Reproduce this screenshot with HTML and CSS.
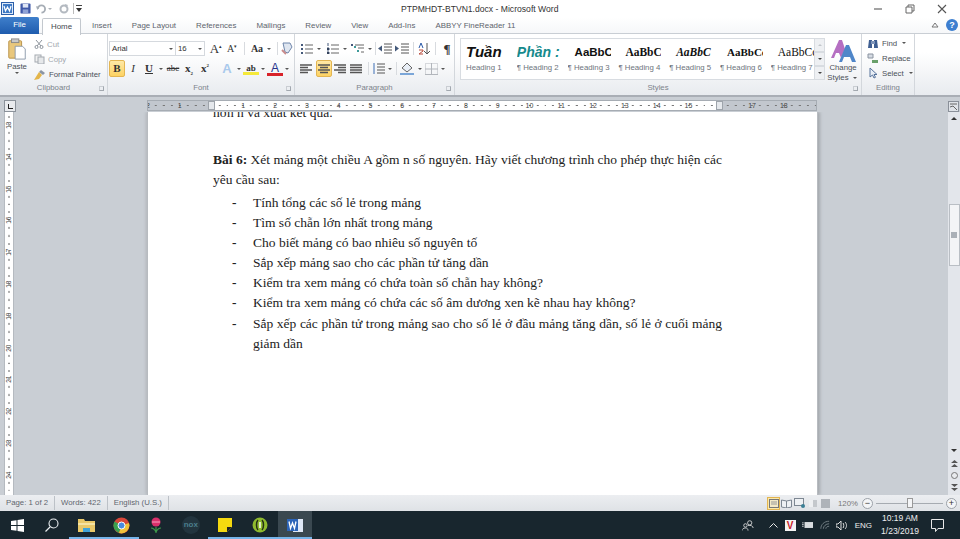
FILE: index.html
```html
<!DOCTYPE html>
<html lang="vi">

<head>
    <meta charset="UTF-8">
    <meta name="viewport" content="width=device-width, initial-scale=1.0">
    <title>PTPMHDT-BTVN1.docx - Microsoft Word</title>
    <link rel="stylesheet" href="styles.css">
</head>

<body>
    <div id="app">
        <!-- title bar -->
        <div class="titlebar">
            <div class="qat">
                <svg class="q-word" width="13" height="13" viewBox="0 0 13 13"><rect x=".5" y=".5" width="12" height="12" fill="#dfeaf8" stroke="#2b5ea8"/><rect x="2" y="2" width="9" height="9" fill="#3e79c4"/><path d="M3 4l1.500 5 2-4 2 4L10 4" fill="none" stroke="#fff" stroke-width="1.200"/></svg>
                <svg class="q-save" width="11" height="11" viewBox="0 0 12 12"><rect x=".5" y=".5" width="11" height="11" rx="1" fill="#3f58a8"/><rect x="3" y="1" width="6" height="4" fill="#dfe6f5"/><rect x="3" y="7" width="6" height="4" fill="#8fa3d6"/></svg>
                <svg class="q-undo" width="10" height="10" viewBox="0 0 11 10"><path d="M2 5 A4 4 0 1 1 6 9" fill="none" stroke="#a6adb5" stroke-width="2"/><path d="M0 2l4 .5L1.500 6z" fill="#a6adb5"/></svg>
                <span class="q-arrow"></span>
                <svg class="q-redo" width="10" height="10" viewBox="0 0 10 10"><circle cx="5" cy="5" r="3.500" fill="none" stroke="#b3b9c0" stroke-width="2"/><path d="M6 0l3 1-2 3z" fill="#b3b9c0"/></svg>
                <span class="q-sep"></span>
                <svg class="q-more" width="6" height="7" viewBox="0 0 6 7"><path d="M0 .5h6" stroke="#444"/><path d="M0 3h6L3 7z" fill="#333"/></svg>
            </div>
            <div class="doc-title">PTPMHDT-BTVN1.docx - Microsoft Word</div>
            <div class="winctl">
                <svg width="10" height="10" viewBox="0 0 10 10"><path d="M1 5h8" stroke="#666" stroke-width="1.200"/></svg>
                <svg width="10" height="10" viewBox="0 0 10 10"><path d="M1 3h6v6H1zM3 3V1h6v6H7" fill="none" stroke="#666"/></svg>
                <svg width="10" height="10" viewBox="0 0 10 10"><path d="M1 1l8 8M9 1L1 9" stroke="#555" stroke-width="1.100"/></svg>
            </div>
        </div>

        <!-- ribbon tabs -->
        <div class="tabs">
            <div class="tab-file">File</div>
            <div class="tab-home">Home</div>
            <div class="tab t-insert">Insert</div>
            <div class="tab">Page Layout</div>
            <div class="tab">References</div>
            <div class="tab">Mailings</div>
            <div class="tab">Review</div>
            <div class="tab">View</div>
            <div class="tab">Add-Ins</div>
            <div class="tab">ABBYY FineReader 11</div>
            <div class="tabs-right">
                <svg width="8" height="6" viewBox="0 0 8 6"><path d="M1 5l3-4 3 4z" fill="none" stroke="#777"/></svg>
                <span class="help">?</span>
            </div>
        </div>

        <!-- ribbon -->
        <div class="ribbon">
            <div class="group g-clipboard">
                <div class="group-body clip-body">
                    <div class="paste">
                        <svg width="20" height="22" viewBox="0 0 20 24"><rect x="1" y="3" width="14" height="19" rx="1" fill="#e9c77c" stroke="#b78f45"/><rect x="4" y="1" width="8" height="4" fill="#c9c9c9" stroke="#888"/><path d="M8 9h8l3 3v11H8z" fill="#fff" stroke="#8a97a8"/></svg>
                        <span class="paste-label">Paste</span>
                        <span class="arr"></span>
                    </div>
                    <div class="clip-col">
                        <div class="clip-row muted">
                            <svg width="10" height="10" viewBox="0 0 10 10"><path d="M2 1l5 6M8 1L3 7" stroke="#8d949c"/><circle cx="2.500" cy="8" r="1.500" fill="none" stroke="#8d949c"/><circle cx="7.500" cy="8" r="1.500" fill="none" stroke="#8d949c"/></svg>
                            Cut
                        </div>
                        <div class="clip-row muted">
                            <svg width="11" height="10" viewBox="0 0 11 10"><rect x="1" y="1" width="6" height="7" fill="#f2f2f2" stroke="#a3a9b0"/><rect x="4" y="3" width="6" height="7" fill="#e6e8ea" stroke="#a3a9b0"/></svg>
                            Copy
                        </div>
                        <div class="clip-row">
                            <svg width="12" height="11" viewBox="0 0 12 11"><path d="M7 1l4 3-2 2-4-3z" fill="#8b95a5"/><path d="M5 3l3 3-3 4-5 1z" fill="#e3b54a"/></svg>
                            Format Painter
                        </div>
                    </div>
                </div>
                <div class="group-label">Clipboard<span class="launcher"></span></div>
            </div>

            <div class="group g-font">
                <div class="group-body tool-rows">
                    <div class="row">
                        <div class="combo c-font">Arial<span class="arr"></span></div>
                        <div class="combo c-size">16<span class="arr"></span></div>
                        <div class="tool big-a">A<sup>▴</sup></div>
                        <div class="tool small-a">A<sup>▾</sup></div>
                        <span class="rsep"></span>
                        <div class="tool case">Aa</div><span class="arr"></span>
                        <span class="rsep"></span>
                        <svg class="erase" width="14" height="13" viewBox="0 0 14 13"><path d="M3 1h7l2 4-4 6-3-1z" fill="#dfe6f0" stroke="#6f86ab"/><path d="M2 8l4 4" stroke="#c98c8c" stroke-width="2"/></svg>
                    </div>
                    <div class="row">
                        <div class="tool on b">B</div>
                        <div class="tool i">I</div>
                        <div class="tool u">U</div><span class="arr"></span>
                        <div class="tool strike">abc</div>
                        <div class="tool sub">x<sub>2</sub></div>
                        <div class="tool sup">x<sup>2</sup></div>
                        <span class="gap6"></span>
                        <div class="tool effect">A</div><span class="arr"></span>
                        <div class="tool hilite">ab</div><span class="arr"></span>
                        <div class="tool fcolor">A</div><span class="arr"></span>
                    </div>
                </div>
                <div class="group-label">Font<span class="launcher"></span></div>
            </div>

            <div class="group g-para">
                <div class="group-body tool-rows">
                    <div class="row para-top">
                        <svg class="ic" width="12" height="11" viewBox="0 0 12 11"><path d="M0 1h2v2H0zM0 5h2v2H0zM0 9h2v2H0z" fill="#44597a"/><path d="M4 2h8M4 6h8M4 10h8" stroke="#666"/></svg><span class="arr wide"></span>
                        <svg class="ic" width="12" height="11" viewBox="0 0 12 11"><path d="M1 0v3M0 5h2v2H0zM0 9h2v2H0z" stroke="#44597a"/><path d="M4 2h8M4 6h8M4 10h8" stroke="#666"/></svg><span class="arr"></span>
                        <svg class="ic" width="13" height="11" viewBox="0 0 13 11"><path d="M0 1h2v2H0z" fill="#44597a"/><path d="M3 3h2v2H3zM6 7h2v2H6z" fill="#3f9a9a"/><path d="M4 2h9M7 5h6M10 9h3" stroke="#666"/></svg><span class="arr"></span>
                        <span class="rsep tight"></span>
                        <svg class="ic" width="14" height="11" viewBox="0 0 14 11"><path d="M6 1h8M6 4h8M6 7h8M6 10h8" stroke="#555"/><path d="M0 5.500l4-3v6z" fill="#44597a"/></svg>
                        <svg class="ic" width="14" height="11" viewBox="0 0 14 11"><path d="M6 1h8M6 4h8M6 7h8M6 10h8" stroke="#555"/><path d="M4 5.500l-4-3v6z" fill="#44597a"/></svg>
                        <span class="rsep"></span>
                        <svg class="ic" width="13" height="13" viewBox="0 0 13 13"><path d="M9 1v10M9 12l-3-3M9 12l3-3" stroke="#555" fill="none"/><path d="M1 6l2-5 2 5" fill="none" stroke="#2a59a8"/><path d="M1 8h4v1L1 12h4" fill="none" stroke="#b84a3a"/></svg>
                        <span class="rsep"></span>
                        <div class="tool pil">¶</div>
                    </div>
                    <div class="row">
                        <svg class="al" width="12" height="10" viewBox="0 0 12 10"><path d="M0 1h12M0 3.500h8M0 6h12M0 8.500h8" stroke="#555" stroke-width="1.300"/></svg>
                        <div class="tool on al-on"><svg width="12" height="10" viewBox="0 0 12 10"><path d="M0 1h12M2 3.500h8M0 6h12M2 8.500h8" stroke="#555" stroke-width="1.300"/></svg></div>
                        <svg class="al" width="12" height="10" viewBox="0 0 12 10"><path d="M0 1h12M4 3.500h8M0 6h12M4 8.500h8" stroke="#555" stroke-width="1.300"/></svg>
                        <svg class="al" width="12" height="10" viewBox="0 0 12 10"><path d="M0 1h12M0 3.500h12M0 6h12M0 8.500h12" stroke="#555" stroke-width="1.300"/></svg>
                        <span class="rsep"></span>
                        <svg class="ic" width="13" height="11" viewBox="0 0 13 11"><path d="M5 1h8M5 4h8M5 7h8M5 10h8" stroke="#555"/><path d="M2 0v11" stroke="#3d6fb5"/></svg><span class="arr"></span>
                        <span class="rsep"></span>
                        <svg class="ic" width="15" height="13" viewBox="0 0 15 13"><path d="M2 6l5-5 5 5-5 4z" fill="#e8eef6" stroke="#666"/><path d="M0 11h14v2H0z" fill="#7ba6d8"/></svg><span class="arr"></span>
                        <svg class="ic" width="13" height="12" viewBox="0 0 13 12"><rect x=".5" y=".5" width="12" height="11" fill="none" stroke="#b2b6bc" stroke-dasharray="1 1"/><path d="M0 11.500h13M6.500 0v12M0 6h13" stroke="#b2b6bc"/></svg><span class="arr"></span>
                    </div>
                </div>
                <div class="group-label">Paragraph<span class="launcher"></span></div>
            </div>

            <div class="group g-styles">
                <div class="group-body styles-body">
                    <div class="gallery">
                        <div class="style"><div class="pv pv1">Tuần</div><div class="st-name">Heading 1</div></div>
                        <div class="style"><div class="pv pv2">Phần :</div><div class="st-name">¶ Heading 2</div></div>
                        <div class="style"><div class="pv pv3">AaBbCc</div><div class="st-name">¶ Heading 3</div></div>
                        <div class="style"><div class="pv pv4">AaBbCc</div><div class="st-name">¶ Heading 4</div></div>
                        <div class="style"><div class="pv pv5">AaBbC</div><div class="st-name">¶ Heading 5</div></div>
                        <div class="style"><div class="pv pv6">AaBbCc</div><div class="st-name">¶ Heading 6</div></div>
                        <div class="style"><div class="pv pv7">AaBbCc</div><div class="st-name">¶ Heading 7</div></div>
                    </div>
                    <div class="gal-btns">
                        <span><i class="up"></i></span>
                        <span><i class="down"></i></span>
                        <span><i class="down bar"></i></span>
                    </div>
                    <div class="change">
                        <svg width="26" height="25" viewBox="0 0 26 25"><path d="M1 20L9 2h3l3 9-4 9-2-5H6l-2 5z" fill="#b56fc2"/><path d="M9 24L16 7h3l7 17h-4l-2-5h-6l-2 5z" fill="#4f86c9"/></svg>
                        <span>Change</span>
                        <span>Styles <i class="arr inl"></i></span>
                    </div>
                </div>
                <div class="group-label">Styles<span class="launcher"></span></div>
            </div>

            <div class="group g-edit">
                <div class="group-body edit-col">
                    <div class="clip-row"><svg width="12" height="11" viewBox="0 0 12 11"><path d="M1 10l1-8h3v8zM7 10V2h3l1 8z" fill="#3f5f92"/><rect x="4" y="3" width="4" height="3" fill="#7f95b8"/></svg>Find <i class="arr inl"></i></div>
                    <div class="clip-row"><svg width="12" height="11" viewBox="0 0 12 11"><path d="M1 1h5v4H1z" fill="#d5dbe3" stroke="#8a93a0"/><path d="M5 7h6v3H5z" fill="#6aa06a"/></svg>Replace</div>
                    <div class="clip-row"><svg width="12" height="12" viewBox="0 0 12 12"><path d="M3 1v9l2.500-2 1.500 3 1.500-.7L7 7.500h3z" fill="#e8eef6" stroke="#56729b"/></svg>Select <i class="arr inl"></i></div>
                </div>
                <div class="group-label">Editing</div>
            </div>
        </div>

        <!-- horizontal ruler -->
        <div class="ruler-row">
            <div class="tab-stop"><i></i></div>
            <div class="hruler">
                <span class="cell">2</span><span class="cell">1</span><span class="cell"><b class="hmark"></b></span><span class="cell">1</span><span class="cell">2</span><span class="cell">3</span><span class="cell">4</span><span class="cell">5</span><span class="cell">6</span><span class="cell">7</span><span class="cell">8</span><span class="cell">9</span><span class="cell">10</span><span class="cell">11</span><span class="cell">12</span><span class="cell">13</span><span class="cell">14</span><span class="cell">15</span><span class="cell"><b class="hmark"></b></span><span class="cell">17</span><span class="cell">18</span><span class="cell"></span>
            </div>
            <div class="ruler-btn">
                <svg width="11" height="11" viewBox="0 0 11 11"><rect x=".5" y=".5" width="10" height="10" fill="#dfe3e8" stroke="#8a9099"/><path d="M2 3h7M2 6l3-1 4 4" fill="none" stroke="#666"/></svg>
            </div>
        </div>

        <!-- document -->
        <div class="workspace">
            <div class="vruler">
                <span>13</span><span>14</span><span>15</span><span>16</span><span>17</span><span>18</span><span>19</span><span>20</span><span>21</span><span>22</span><span>23</span><span>24</span>
            </div>
            <div class="canvas">
                <div class="page">
                    <p class="clipped">hơn n và xuất kết quả.</p>
                    <p class="para"><b>Bài 6:</b> Xét mảng một chiều A gồm n số nguyên. Hãy viết chương trình cho phép thực hiện các yêu cầu sau:</p>
                    <ul class="dash-list">
                        <li>Tính tổng các số lẻ trong mảng</li>
                        <li>Tìm số chẵn lớn nhất trong mảng</li>
                        <li>Cho biết mảng có bao nhiêu số nguyên tố</li>
                        <li>Sắp xếp mảng sao cho các phần tử tăng dần</li>
                        <li>Kiểm tra xem mảng có chứa toàn số chẵn hay không?</li>
                        <li>Kiểm tra xem mảng có chứa các số âm dương xen kẽ nhau hay không?</li>
                        <li>Sắp xếp các phần tử trong mảng sao cho số lẻ ở đầu mảng tăng dần, số lẻ ở cuối mảng giảm dần</li>
                    </ul>
                </div>
            </div>
            <div class="scrollbar">
                <i class="sb-up"></i>
                <div class="thumb"><i></i></div>
                <div class="sb-end">
                    <i class="sb-down"></i>
                    <svg width="7" height="7" viewBox="0 0 7 7"><path d="M0 3l3.500-3L7 3zM0 7l3.500-3L7 7z" fill="#555"/></svg>
                    <svg width="7" height="7" viewBox="0 0 7 7"><circle cx="3.500" cy="3.500" r="3" fill="#e8eaed" stroke="#777"/></svg>
                    <svg width="7" height="7" viewBox="0 0 7 7"><path d="M0 0l3.500 3L7 0zM0 4l3.500 3L7 4z" fill="#555"/></svg>
                </div>
            </div>
        </div>

        <!-- status bar -->
        <div class="statusbar">
            <span class="st-item">Page: 1 of 2</span>
            <span class="st-item">Words: 422</span>
            <span class="st-item">English (U.S.)</span>
            <div class="st-right">
                <span class="view on-view"><svg width="10" height="9" viewBox="0 0 10 9"><rect x=".5" y=".5" width="9" height="8" fill="#f3e9c8" stroke="#777"/><path d="M2 3h6M2 5h6" stroke="#999"/></svg></span>
                <span class="view"><svg width="11" height="9" viewBox="0 0 11 9"><path d="M.5 1l5 1 5-1v7l-5 1-5-1zM5.500 2v7" fill="#eef1f4" stroke="#7d8792"/></svg></span>
                <span class="view"><svg width="12" height="10" viewBox="0 0 12 10"><rect x=".5" y=".5" width="9" height="7" fill="#eef1f4" stroke="#7d8792"/><circle cx="9" cy="8" r="2" fill="#3b7f95"/></svg></span>
                <span class="view"><svg width="10" height="9" viewBox="0 0 10 9"><path d="M1 1h8v7H1z" fill="#c4c8cc"/><path d="M1 1h4v7H1z" fill="#eef0f2"/></svg></span>
                <span class="view"><svg width="9" height="9" viewBox="0 0 9 9"><rect width="9" height="9" fill="#aeb3b9"/></svg></span>
                <span class="zoom-val">120%</span>
                <span class="zbtn">−</span>
                <div class="slider"><i></i></div>
                <span class="zbtn">+</span>
            </div>
        </div>

        <!-- windows taskbar -->
        <div class="taskbar">
            <div class="slot">
                <svg width="13" height="13" viewBox="0 0 13 13"><path d="M0 2l5.500-.8V6H0zM6.500 1l6.500-1v6H6.500zM0 7h5.500v4.800L0 11zM6.500 7H13v6l-6.500-1z" fill="#fff"/></svg>
            </div>
            <div class="slot">
                <svg width="14" height="14" viewBox="0 0 14 14"><circle cx="8.500" cy="5.500" r="4.500" fill="none" stroke="#e8ecef" stroke-width="1.100"/><path d="M5 9l-4.500 4.500" stroke="#e8ecef" stroke-width="1.200"/></svg>
            </div>
            <div class="slot open">
                <svg width="17" height="15" viewBox="0 0 17 15"><path d="M0 1h6l1 2h10v11H0z" fill="#e9c869"/><path d="M0 5h17v2H0z" fill="#f5e3a3"/><path d="M5 10h7v4H5z" fill="#3fa3d9"/></svg>
            </div>
            <div class="slot open">
                <svg width="17" height="17" viewBox="0 0 17 17"><circle cx="8.500" cy="8.500" r="8" fill="#d8473a"/><path d="M8.500 8.500L1.500 4.500A8 8 0 0 0 6 16z" fill="#3aa04f"/><path d="M8.500 8.500L6 16A8 8 0 0 0 16 6z" fill="#f1c33a"/><circle cx="8.500" cy="8.500" r="3.500" fill="#4a8be0" stroke="#fff"/></svg>
            </div>
            <div class="slot">
                <svg width="12" height="16" viewBox="0 0 12 16"><circle cx="6" cy="5" r="4.500" fill="#d92f6a"/><path d="M2 5h8" stroke="#f4a3c0"/><path d="M6 10v6M1 11c2 0 4 2 5 4M11 11c-2 0-4 2-5 4" stroke="#3d9a4a" fill="none" stroke-width="1.200"/></svg>
            </div>
            <div class="slot">
                <span class="nox">nox</span>
            </div>
            <div class="slot open">
                <svg width="14" height="14" viewBox="0 0 14 14"><path d="M0 0h14v9l-5 5H0z" fill="#f5d90f"/><path d="M9 14V9h5z" fill="#222"/></svg>
            </div>
            <div class="slot open">
                <svg width="16" height="16" viewBox="0 0 16 16"><circle cx="8" cy="8" r="7.500" fill="#8fbb2e"/><path d="M6 3C4 5 4 11 6 13M10 3c2 2 2 8 0 10" fill="none" stroke="#243016" stroke-width="1.500"/><path d="M8 5v6" stroke="#fff" stroke-width="1.500"/></svg>
            </div>
            <div class="slot open active">
                <svg width="16" height="15" viewBox="0 0 16 15"><rect x="6" y="1" width="10" height="13" fill="#dfe8f6"/><rect y="1" width="11" height="12" fill="#2c64b8"/><path d="M2 3.500l1.500 7L5.500 5l2 5.500L9 3.500" fill="none" stroke="#fff" stroke-width="1.300"/></svg>
            </div>
            <div class="tray">
                <svg width="12" height="12" viewBox="0 0 14 13"><circle cx="9" cy="4" r="2.500" fill="none" stroke="#ddd"/><circle cx="4" cy="7" r="2" fill="none" stroke="#ddd"/><path d="M0 13c0-2 2-3 4-3s3 1 3 3M7 7c3-.5 6 .5 6 3" fill="none" stroke="#ddd"/></svg>
                <svg class="t-chev" width="9" height="6" viewBox="0 0 9 6"><path d="M.5 5.500l4-4 4 4" fill="none" stroke="#e8e8e8"/></svg>
                <span class="t-v">V</span>
                <svg class="t-bat" width="11" height="8" viewBox="0 0 13 9"><rect x="3" y="1" width="10" height="7" fill="#d8dcdf"/><path d="M0 2h2M0 4h2M0 6h2" stroke="#d8dcdf"/></svg>
                <svg class="t-wifi" width="10" height="10" viewBox="0 0 12 11"><path d="M1 10c0-5 4-9 10-9M4 10c0-3 3-6 7-6M7 10c0-2 2-3 4-3" fill="none" stroke="#7f8a90"/></svg>
                <svg class="t-vol" width="12" height="11" viewBox="0 0 12 11"><path d="M0 4h2l3-3v9L2 7H0z" fill="none" stroke="#ddd"/><path d="M7 3c1 1 1 4 0 5M9 2c2 2 2 5 0 7" fill="none" stroke="#ddd"/></svg>
                <span class="t-lang">ENG</span>
                <div class="t-clock"><span>10:19 AM</span><span>1/23/2019</span></div>
                <svg class="t-note" width="13" height="13" viewBox="0 0 13 13"><path d="M.5.500h12v9H7l-2.500 3v-3h-4z" fill="none" stroke="#e8e8e8"/></svg>
            </div>
        </div>
    </div>
</body>

</html>
```

FILE: styles.css
```css
html,
body {
    margin: 0;
    padding: 0;
    height: 100%;
    overflow: hidden;
}

#app {
    width: 960px;
    height: 539px;
    display: flex;
    flex-direction: column;
    font-family: "Liberation Sans", Arial, sans-serif;
    font-size: 7.8px;
    color: #555b63;
    background-color: #fff;
}

svg {
    display: block;
    flex-shrink: 0;
}

/* title bar */
.titlebar {
    height: 17px;
    display: flex;
    align-items: center;
    position: relative;
    background-color: #fff;
}

.qat {
    display: flex;
    align-items: center;
    padding-left: 1px;
}

.q-save {
    margin-left: 6px;
}

.q-undo {
    margin-left: 5px;
}

.q-arrow {
    width: 0;
    height: 0;
    margin-left: 2px;
    border: 2px solid transparent;
    border-top: 2px solid #aab0b7;
    border-bottom: 0;
}

.q-redo {
    margin-left: 7px;
}

.q-sep {
    width: 1px;
    height: 11px;
    margin-left: 4px;
    background-color: #bbb;
}

.q-more {
    margin-left: 2px;
}

.doc-title {
    position: absolute;
    left: 401px;
    top: 4px;
    font-size: 8.6px;
    color: #333;
    white-space: nowrap;
}

.winctl {
    margin-left: auto;
    display: flex;
    gap: 22px;
    padding-right: 13px;
}

/* tabs */
.tabs {
    height: 17px;
    display: flex;
    align-items: center;
    gap: 20px;
    font-size: 7.9px;
    background: linear-gradient(#fff, #f6f7f9);
    border-bottom: 1px solid #c9ced4;
    box-sizing: border-box;
}

.tab-file {
    width: 39px;
    height: 17px;
    margin-right: -17px;
    line-height: 16px;
    text-align: center;
    color: #fff;
    background: linear-gradient(#3f7fcb, #1f5cae);
    border-radius: 2px 2px 0 0;
}

.tab-home {
    width: 39px;
    height: 17px;
    line-height: 16px;
    text-align: center;
    color: #44494f;
    background-color: #fff;
    border: 1px solid #c3c8ce;
    border-bottom: 0;
    border-radius: 2px 2px 0 0;
    box-sizing: border-box;
    position: relative;
    top: 1px;
}

.tab {
    color: #5d646c;
    white-space: nowrap;
}

.t-insert {
    margin-left: -9px;
}

.tabs-right {
    margin-left: auto;
    display: flex;
    align-items: center;
    gap: 7px;
    padding-right: 2px;
}

.help {
    width: 12px;
    height: 12px;
    border-radius: 50%;
    background-color: #3d7fd0;
    color: #fff;
    font-size: 9px;
    font-weight: bold;
    line-height: 12px;
    text-align: center;
}

/* ribbon */
.ribbon {
    height: 63px;
    display: flex;
    background: linear-gradient(#fff 30%, #e8ebef);
    border-bottom: 2px solid #a9aeb5;
    box-sizing: border-box;
}

.group {
    display: flex;
    flex-direction: column;
    border-right: 1px solid #d3d7dc;
    box-sizing: border-box;
}

.g-clipboard {
    width: 108px;
}

.g-font {
    width: 187px;
}

.g-para {
    width: 160px;
}

.g-styles {
    width: 407px;
}

.g-edit {
    width: 53px;
}

.group-body {
    flex: 1;
    min-height: 0;
}

.group-label {
    height: 14px;
    line-height: 13px;
    text-align: center;
    color: #7c838b;
    position: relative;
}

.launcher {
    position: absolute;
    right: 3px;
    bottom: 4px;
    width: 5px;
    height: 5px;
    border: 1px solid #a2a8af;
    border-top-color: #c9cdd2;
    border-left-color: #c9cdd2;
    box-sizing: border-box;
}

.arr {
    display: inline-block;
    width: 0;
    height: 0;
    margin: 0 2px;
    border: 2px solid transparent;
    border-top: 2px solid #555;
    border-bottom: 0;
    flex-shrink: 0;
}

.arr.inl {
    vertical-align: middle;
}

.arr.wide {
    margin-right: 4px;
}

/* clipboard */
.clip-body {
    display: flex;
    padding: 4px 0 0 7px;
}

.paste {
    width: 20px;
    display: flex;
    flex-direction: column;
    align-items: center;
    color: #4a5057;
}

.paste-label {
    margin-top: 2px;
    line-height: 10px;
}

.clip-col,
.edit-col {
    display: flex;
    flex-direction: column;
    gap: 3px;
    padding-left: 7px;
}

.edit-col {
    padding-top: 3px;
    padding-left: 5px;
}

.clip-row {
    height: 12px;
    display: flex;
    align-items: center;
    gap: 3px;
    white-space: nowrap;
    color: #4a5057;
}

.clip-row.muted {
    color: #a3a9b0;
}

/* tool rows */
.tool-rows {
    display: flex;
    flex-direction: column;
    gap: 3px;
    padding: 6px 0 0 1px;
}

.row {
    height: 17px;
    display: flex;
    align-items: center;
}

.combo {
    height: 15px;
    line-height: 14px;
    padding-left: 2px;
    background-color: #fff;
    border: 1px solid #d5d9de;
    box-sizing: border-box;
    color: #333;
    display: flex;
    align-items: center;
    justify-content: space-between;
}

.c-font {
    width: 69px;
}

.c-size {
    width: 30px;
    border-left: 0;
    margin-right: 3px;
}

.tool {
    width: 16px;
    height: 17px;
    line-height: 17px;
    text-align: center;
    flex-shrink: 0;
    color: #333;
    font-family: "Liberation Serif", serif;
    font-size: 11px;
    box-sizing: border-box;
}

.tool.on {
    background: linear-gradient(#ffe9a6, #fdd263);
    border: 1px solid #e3b552;
    border-radius: 2px;
    line-height: 15px;
}

.b {
    font-weight: bold;
}

.i {
    font-style: italic;
}

.u {
    text-decoration: underline;
    font-weight: bold;
}

.strike {
    text-decoration: line-through;
    font-size: 9px;
}

.sub,
.sup {
    font-weight: bold;
}

.tool sub,
.tool sup {
    font-size: 5px;
    line-height: 0;
}

.big-a {
    font-size: 13px;
}

.small-a {
    font-size: 10px;
}

.case {
    font-size: 10px;
    font-weight: bold;
}

.gap6 {
    width: 6px;
    flex-shrink: 0;
}

.rsep {
    width: 1px;
    height: 13px;
    margin: 0 4px;
    background-color: #d8dbdf;
    flex-shrink: 0;
}

.erase {
    margin-left: -2px;
}

.effect {
    font-family: "Liberation Sans", sans-serif;
    font-size: 13px;
    font-weight: bold;
    color: #a9c9ec;
}

.hilite {
    font-size: 9px;
    font-weight: bold;
    line-height: 12px;
    height: 13px;
    border-bottom: 3px solid #f5e93a;
}

.fcolor {
    font-family: "Liberation Sans", sans-serif;
    font-size: 12px;
    line-height: 13px;
    height: 14px;
    border-bottom: 3px solid #d8222a;
    color: #26348c;
}

/* paragraph */
.g-para .tool-rows {
    padding-left: 5px;
}

.g-para .rsep {
    margin: 0 2px;
}

.g-para .rsep.tight {
    margin: 0;
}

.para-top {
    gap: 1px;
}

.ic {
    margin: 0 1px;
}

.al {
    margin-right: 4px;
}

.al-on {
    display: flex;
    align-items: center;
    justify-content: center;
    margin-right: 2px;
}

.pil {
    font-size: 13px;
    font-weight: bold;
}

/* styles gallery */
.styles-body {
    display: flex;
    align-items: flex-start;
    padding: 4px 0 0 5px;
}

.gallery {
    width: 356px;
    height: 42px;
    display: flex;
    padding-left: 5px;
    background-color: #fff;
    border: 1px solid #d8dce1;
    box-sizing: border-box;
    overflow: hidden;
}

.style {
    width: 50.8px;
    flex-shrink: 0;
    overflow: hidden;
    white-space: nowrap;
}

.pv {
    width: 43px;
    height: 24px;
    padding-left: 7px;
    line-height: 26px;
    color: #111;
    overflow: hidden;
    font-size: 11.5px;
    font-weight: bold;
    box-sizing: border-box;
}

.pv1 {
    padding-left: 0;
    font-size: 15px;
    font-style: italic;
}

.pv2 {
    padding-left: 0;
    font-size: 14px;
    font-style: italic;
    color: #168a8c;
}

.pv4,
.pv5,
.pv6,
.pv7 {
    font-family: "Liberation Serif", serif;
}

.pv5 {
    font-style: italic;
}

.pv6 {
    font-size: 11px;
}

.pv7 {
    font-weight: normal;
}

.st-name {
    color: #6d747c;
    line-height: 10px;
}

.gal-btns {
    width: 10px;
    height: 42px;
    display: flex;
    flex-direction: column;
}

.gal-btns span {
    flex: 1;
    display: flex;
    align-items: center;
    justify-content: center;
    background-color: #eef0f3;
    border: 1px solid #d8dce1;
    border-left: 0;
    box-sizing: border-box;
}

.gal-btns .up {
    border: 2px solid transparent;
    border-bottom: 2px solid #c2c6cb;
    border-top: 0;
}

.gal-btns .down {
    border: 2px solid transparent;
    border-top: 2px solid #444;
    border-bottom: 0;
}

.gal-btns .bar {
    box-shadow: 0 -2px 0 -1px #444;
}

.change {
    width: 36px;
    display: flex;
    flex-direction: column;
    align-items: center;
    line-height: 10px;
    color: #4a5057;
}

/* rulers */
.ruler-row {
    height: 15px;
    display: flex;
    align-items: flex-end;
    background-color: #c9ced4;
}

.tab-stop {
    width: 12px;
    height: 12px;
    margin: 0 0 0 4px;
    background-color: #e9ebee;
    border: 1px solid #8b929a;
    box-sizing: border-box;
    display: flex;
    align-items: center;
    justify-content: center;
}

.tab-stop i {
    width: 4px;
    height: 4px;
    border-left: 1px solid #222;
    border-bottom: 1px solid #222;
}

.hruler {
    width: 670px;
    height: 11px;
    margin: 0 0 1px 131px;
    display: flex;
    overflow: hidden;
    border: 1px solid #a6acb3;
    box-sizing: border-box;
    background: linear-gradient(to right, #c2c7ce 65px, #fff 65px, #fff 574px, #c2c7ce 574px);
}

.cell {
    width: 31.8px;
    flex-shrink: 0;
    font-size: 7px;
    line-height: 9px;
    text-align: center;
    color: #444;
    background: radial-gradient(circle, #777 .5px, transparent 1px) -4px 0 / 7.95px 9px;
    position: relative;
}

.cell:first-child {
    margin-left: -16px;
}

.hmark {
    position: absolute;
    left: 12px;
    top: 0;
    width: 7px;
    height: 9px;
    background-color: #e5e8ec;
    border: 1px solid #9ea4ab;
    box-sizing: border-box;
}

.ruler-btn {
    margin-left: auto;
    margin-right: 1px;
}

.workspace {
    flex: 1;
    min-height: 0;
    display: flex;
    background-color: #c9ced4;
}

.vruler {
    width: 10px;
    margin-left: 4px;
    background-color: #fff;
    border-left: 1px solid #b5bac0;
    border-right: 1px solid #b5bac0;
    box-sizing: border-box;
    display: flex;
    flex-direction: column;
    overflow: hidden;
    font-size: 6.5px;
    color: #444;
}

.vruler span {
    height: 31.8px;
    flex-shrink: 0;
    writing-mode: vertical-rl;
    transform: rotate(180deg);
    text-align: center;
    line-height: 8px;
    background: radial-gradient(circle, #777 .5px, transparent 1px) 0 -4px / 8px 7.95px;
}

.vruler span:first-child {
    margin-top: -3px;
}

.canvas {
    flex: 1;
    min-width: 0;
    padding-left: 134px;
    overflow: hidden;
}

.page {
    width: 669px;
    height: 100%;
    padding: 0 95px 0 65px;
    box-sizing: border-box;
    background-color: #fff;
    box-shadow: 0 0 0 1px #b7bbc0, 3px 0 3px #a4a8ad, -2px 0 3px #b0b4b9;
    font-family: "Liberation Serif", serif;
    font-size: 13.5px;
    line-height: 20px;
    color: #222;
    overflow: hidden;
}

.page p {
    margin: 0;
}

.page .clipped {
    margin-top: -9px;
}

.page .para {
    margin-top: 27px;
    text-align: justify;
}

.dash-list {
    list-style: none;
    margin: 3px 0 0;
    padding: 0 0 0 40px;
    text-align: justify;
}

.dash-list li {
    position: relative;
}

.dash-list li:last-child {
    margin-top: 1px;
}

.dash-list li::before {
    content: "-";
    position: absolute;
    left: -21px;
    font-weight: bold;
}

.scrollbar {
    width: 12px;
    background-color: #e3e6eb;
    display: flex;
    flex-direction: column;
    align-items: center;
    padding: 5px 0 4px;
    box-sizing: border-box;
}

.sb-up {
    border: 3px solid transparent;
    border-bottom: 3px solid #333;
    border-top: 0;
}

.thumb {
    width: 11px;
    height: 62px;
    margin-top: 84px;
    background-color: #f3f4f6;
    border: 1px solid #b9bec4;
    box-sizing: border-box;
    display: flex;
    align-items: center;
    justify-content: center;
}

.thumb i {
    width: 6px;
    height: 6px;
    background-color: #aab0b7;
}

.sb-end {
    margin-top: auto;
    display: flex;
    flex-direction: column;
    align-items: center;
    gap: 5px;
}

.sb-down {
    border: 3px solid transparent;
    border-top: 3px solid #333;
    border-bottom: 0;
    margin-bottom: 3px;
}

/* status bar */
.statusbar {
    height: 16px;
    display: flex;
    align-items: center;
    padding-left: 6px;
    background: linear-gradient(#eceef1, #dfe2e6);
    color: #5f666e;
}

.st-item {
    padding-right: 6px;
    margin-right: 6px;
    border-right: 1px solid #bcc1c7;
    line-height: 14px;
    white-space: nowrap;
}

.st-right {
    margin-left: auto;
    display: flex;
    align-items: center;
    padding-right: 3px;
}

.view {
    width: 13px;
    height: 13px;
    display: flex;
    align-items: center;
    justify-content: center;
    box-sizing: border-box;
}

.on-view {
    background-color: #fbe9a9;
    border: 1px solid #e3b552;
}

.zoom-val {
    width: 21px;
    margin-left: 6px;
    color: #777;
}

.zbtn {
    width: 11px;
    height: 11px;
    margin-left: 3px;
    border: 1px solid #9ba1a8;
    border-radius: 50%;
    box-sizing: border-box;
    background-color: #f4f5f7;
    font-size: 9px;
    line-height: 9px;
    text-align: center;
    color: #333;
}

.slider {
    width: 67px;
    height: 1px;
    margin-left: 3px;
    background-color: #a6abb1;
    position: relative;
}

.slider i {
    position: absolute;
    left: 31px;
    top: -5px;
    width: 6px;
    height: 10px;
    background-color: #f4f5f7;
    border: 1px solid #999;
    box-sizing: border-box;
}

/* taskbar */
.taskbar {
    height: 28px;
    flex-shrink: 0;
    display: flex;
    background-color: #18262e;
}

.slot {
    width: 34.7px;
    height: 28px;
    flex-shrink: 0;
    display: flex;
    align-items: center;
    justify-content: center;
    box-sizing: border-box;
}

.slot.open {
    box-shadow: inset 0 -2px 0 0 #76b4ea;
}

.slot.active {
    background-color: #3a4850;
}

.nox {
    width: 18px;
    height: 18px;
    border-radius: 50%;
    background-color: #22343e;
    font-size: 8px;
    line-height: 18px;
    text-align: center;
    color: #4a7e8c;
    font-weight: bold;
}

.tray {
    margin-left: auto;
    display: flex;
    align-items: center;
    color: #eee;
    font-size: 8.5px;
    padding-right: 16px;
}

.t-chev {
    margin-left: 15px;
}

.t-v {
    width: 11px;
    height: 11px;
    margin-left: 7px;
    background-color: #f4f4f4;
    color: #c9252b;
    font-weight: bold;
    font-size: 10px;
    line-height: 11px;
    text-align: center;
}

.t-bat {
    margin-left: 6px;
}

.t-wifi {
    margin-left: 7px;
}

.t-vol {
    margin-left: 6px;
}

.t-lang {
    margin-left: 7px;
    font-size: 8px;
}

.t-clock {
    width: 38px;
    display: flex;
    flex-direction: column;
    align-items: center;
    margin-left: 9px;
    line-height: 13px;
    white-space: nowrap;
}

.t-note {
    margin-left: 12px;
}
```
